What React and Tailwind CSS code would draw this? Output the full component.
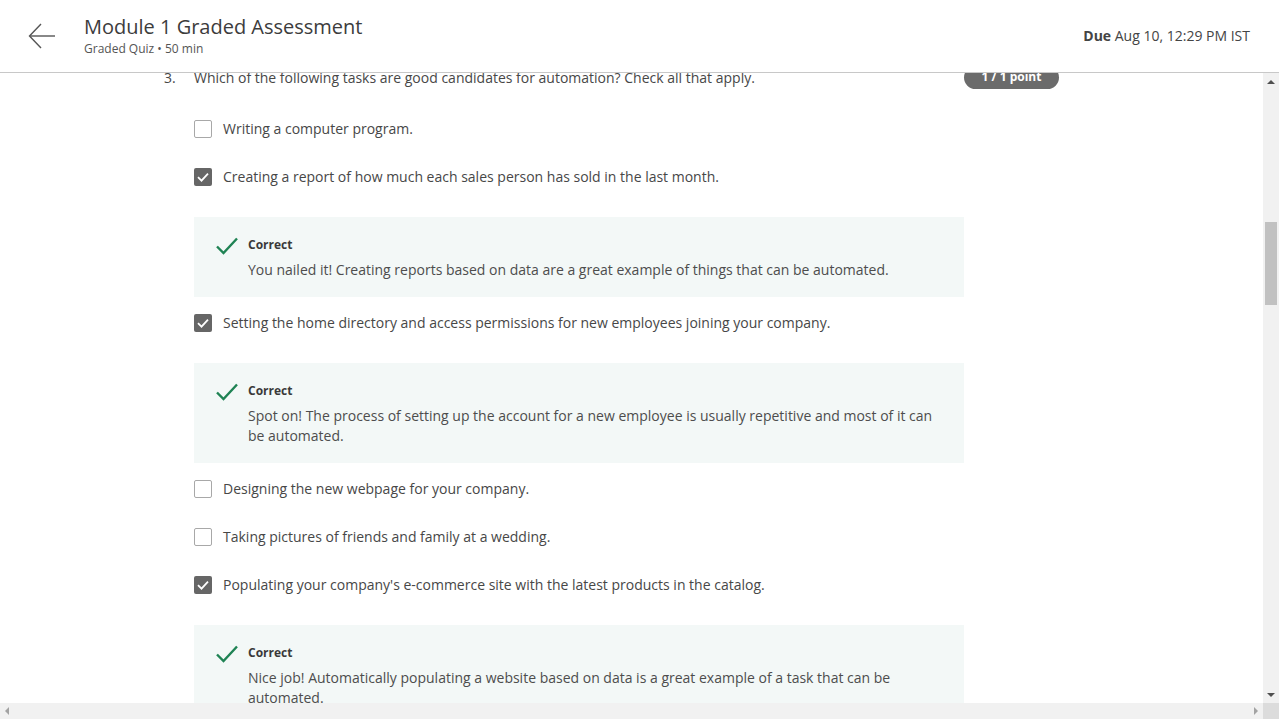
import React from "react";

const font = { fontFamily: '"Open Sans", "Noto Sans", sans-serif' };

function BackArrow() {
  return (
    <svg width="28" height="28" viewBox="0 0 28 28" fill="none" stroke="#555" strokeWidth="1.4">
      <path d="M27 14 H2" />
      <path d="M13 2 L1.5 14 L13 26" />
    </svg>
  );
}

function Checkbox({ checked }) {
  if (checked) {
    return (
      <div className="w-[18px] h-[18px] rounded-[2px] bg-[#666666] flex items-center justify-center shrink-0">
        <svg width="14" height="14" viewBox="0 0 14 14" fill="none" stroke="#fff" strokeWidth="1.8">
          <path d="M2 7.2 L5.5 10.6 L12 3.6" />
        </svg>
      </div>
    );
  }
  return <div className="w-[18px] h-[18px] rounded-[2px] border border-[#a8a8a8] bg-white shrink-0" />;
}

function Option({ checked, text }) {
  return (
    <div className="h-[48px] flex items-center pt-[2px]">
      <Checkbox checked={checked} />
      <span className="ml-[11px] text-[14px] text-[#474747] leading-[20px]">{text}</span>
    </div>
  );
}

function Feedback({ text }) {
  return (
    <div className="mt-[17px] mb-[1px] w-[770px] bg-[#f3f8f7] pt-[20px] pb-[17px] pl-[22px] pr-[24px] flex">
      <svg width="22" height="18" viewBox="0 0 22 18" fill="none" stroke="#1f8354" strokeWidth="2.4" className="shrink-0">
        <path d="M1 9.5 L7.5 16 L21 1.5" />
      </svg>
      <div className="ml-[10px]">
        <div className="text-[12px] font-bold leading-[16px] text-[#3a3a3a]">Correct</div>
        <div className="mt-[7px] text-[14px] leading-[20px] text-[#4d4d4d]">{text}</div>
      </div>
    </div>
  );
}

function UpTri() {
  return <div className="w-0 h-0 border-l-[4px] border-r-[4px] border-b-[4px] border-l-transparent border-r-transparent border-b-[#505050]" />;
}
function DownTri() {
  return <div className="w-0 h-0 border-l-[4px] border-r-[4px] border-t-[4px] border-l-transparent border-r-transparent border-t-[#505050]" />;
}
function LeftTri() {
  return <div className="w-0 h-0 border-t-[4px] border-b-[4px] border-r-[4px] border-t-transparent border-b-transparent border-r-[#a3a3a3]" />;
}
function RightTri() {
  return <div className="w-0 h-0 border-t-[4px] border-b-[4px] border-l-[4px] border-t-transparent border-b-transparent border-l-[#a3a3a3]" />;
}

export default function App() {
  return (
    <div className="w-[1279px] h-[719px] flex flex-col overflow-hidden bg-white" style={font}>
      <header className="h-[73px] shrink-0 border-b border-[#c8c8c8] flex items-start">
        <div className="ml-[28px] mt-[22px]">
          <BackArrow />
        </div>
        <div className="ml-[28px] mt-[13px]">
          <div className="text-[20px] leading-[28px] text-[#3c3c3c]">Module 1 Graded Assessment</div>
          <div className="text-[12px] leading-[16px] text-[#555]">Graded Quiz • 50 min</div>
        </div>
        <div className="ml-auto mr-[29px] mt-[26px] text-[14px] leading-[20px] text-[#444]">
          <span className="font-bold">Due</span> Aug 10, 12:29 PM IST
        </div>
      </header>

      <div className="flex-1 flex min-h-0">
        <div className="flex-1 overflow-hidden">
          <div className="mt-[-8px] ml-[164px] w-[895px]">
            <div className="h-[24px] flex items-center">
              <span className="w-[30px] text-[14px] text-[#474747]">3.</span>
              <span className="text-[14px] text-[#474747]">
                Which of the following tasks are good candidates for automation? Check all that apply.
              </span>
              <span className="ml-auto w-[95px] h-[23px] rounded-full bg-[#6b6b6b] text-white text-[12px] font-bold flex items-center justify-center">
                1 / 1 point
              </span>
            </div>
            <div className="pl-[30px] mt-[15px]">
              <Option checked={false} text="Writing a computer program." />
              <Option checked text="Creating a report of how much each sales person has sold in the last month." />
              <Feedback text="You nailed it! Creating reports based on data are a great example of things that can be automated." />
              <Option checked text="Setting the home directory and access permissions for new employees joining your company." />
              <Feedback text="Spot on! The process of setting up the account for a new employee is usually repetitive and most of it can be automated." />
              <Option checked={false} text="Designing the new webpage for your company." />
              <Option checked={false} text="Taking pictures of friends and family at a wedding." />
              <Option checked text="Populating your company's e-commerce site with the latest products in the catalog." />
              <Feedback text="Nice job! Automatically populating a website based on data is a great example of a task that can be automated." />
            </div>
          </div>
        </div>
        <div className="w-[16px] shrink-0 bg-[#f1f1f1] flex flex-col items-center">
          <div className="h-[17px] flex items-center justify-center"><UpTri /></div>
          <div className="mt-[132px] w-[12px] h-[83px] bg-[#c1c1c1]" />
          <div className="mt-auto h-[17px] flex items-center justify-center"><DownTri /></div>
        </div>
      </div>

      <div className="h-[16px] shrink-0 flex">
        <div className="flex-1 bg-[#f1f1f1] flex items-center justify-between px-[5px]">
          <LeftTri />
          <RightTri />
        </div>
        <div className="w-[16px] bg-[#dcdcdc]" />
      </div>
    </div>
  );
}
